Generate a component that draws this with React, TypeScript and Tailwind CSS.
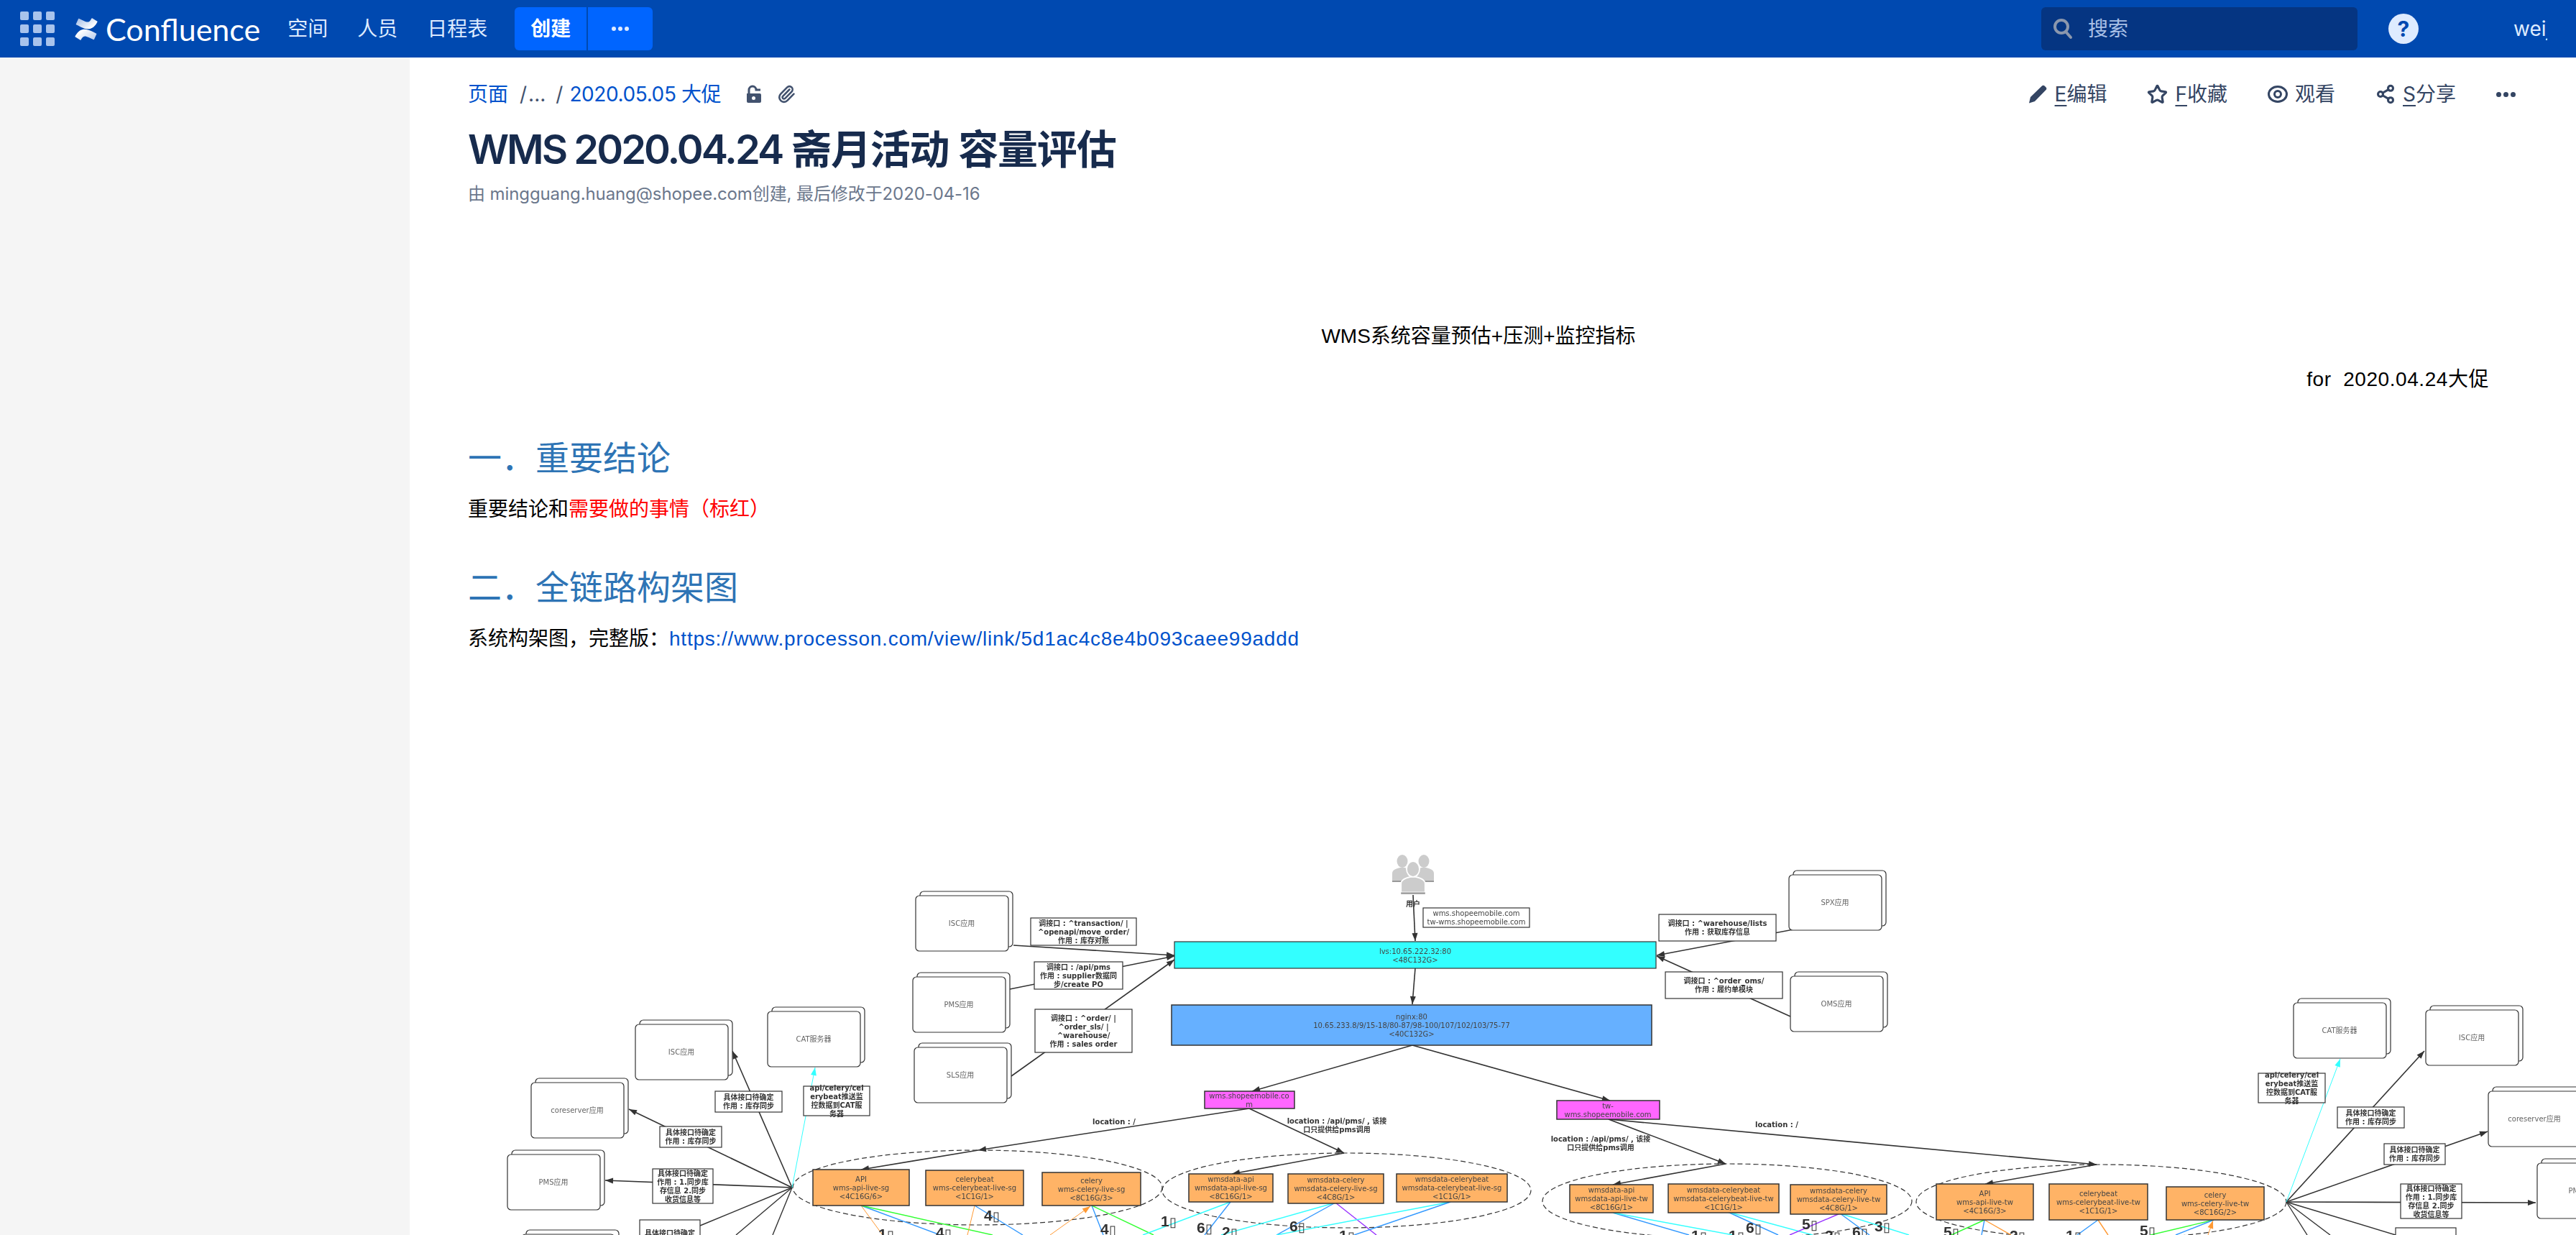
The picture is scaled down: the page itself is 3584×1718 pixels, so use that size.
import React from 'react';
import { Paperclip, Share2, Star } from 'lucide-react';

const BODY = "font-['Inter','Noto_Sans_CJK_SC',sans-serif]";
const DOC = "font-['Liberation_Sans','Noto_Sans_CJK_SC',sans-serif]";
const DIAGRAM_FONT = "'DejaVu Sans','Noto Sans CJK SC',sans-serif";

type Pt = [number, number];

const LINE = '#333333';
const CYAN = '#33ffff';
const BLUE = '#3399ff';
const GREEN = '#33ff33';
const ORANGE = '#ff9933';
const PURPLE = '#9933ff';

// x1, y1, x2, y2 of the two sheets of each app box
const stacks: { x: number; y: number; text: string }[] = [
  { x: 1274, y: 1246, text: 'ISC应用' },
  { x: 1270, y: 1359, text: 'PMS应用' },
  { x: 1272, y: 1457, text: 'SLS应用' },
  { x: 2489, y: 1217, text: 'SPX应用' },
  { x: 2491, y: 1358, text: 'OMS应用' },
  { x: 884, y: 1425, text: 'ISC应用' },
  { x: 1068, y: 1407, text: 'CAT服务器' },
  { x: 739, y: 1506, text: 'coreserver应用' },
  { x: 706, y: 1606, text: 'PMS应用' },
  { x: 726, y: 1717, text: '' },
  { x: 3191, y: 1395, text: 'CAT服务器' },
  { x: 3375, y: 1405, text: 'ISC应用' },
  { x: 3462, y: 1518, text: 'coreserver应用' },
  { x: 3530, y: 1618, text: 'PMS应用' },
];

const orange: { x: number; y: number; x2: number; y2: number; lines: string[] }[] = [
  { x: 1131, y: 1627, x2: 1265, y2: 1677, lines: ['API', 'wms-api-live-sg', '<4C16G/6>'] },
  { x: 1288, y: 1628, x2: 1424, y2: 1677, lines: ['celerybeat', 'wms-celerybeat-live-sg', '<1C1G/1>'] },
  { x: 1450, y: 1631, x2: 1587, y2: 1677, lines: ['celery', 'wms-celery-live-sg', '<8C16G/3>'] },
  { x: 1654, y: 1633, x2: 1771, y2: 1672, lines: ['wmsdata-api', 'wmsdata-api-live-sg', '<8C16G/1>'] },
  { x: 1792, y: 1633, x2: 1925, y2: 1674, lines: ['wmsdata-celery', 'wmsdata-celery-live-sg', '<4C8G/1>'] },
  { x: 1943, y: 1633, x2: 2097, y2: 1672, lines: ['wmsdata-celerybeat', 'wmsdata-celerybeat-live-sg', '<1C1G/1>'] },
  { x: 2184, y: 1648, x2: 2300, y2: 1687, lines: ['wmsdata-api', 'wmsdata-api-live-tw', '<8C16G/1>'] },
  { x: 2321, y: 1647, x2: 2475, y2: 1687, lines: ['wmsdata-celerybeat', 'wmsdata-celerybeat-live-tw', '<1C1G/1>'] },
  { x: 2491, y: 1648, x2: 2625, y2: 1689, lines: ['wmsdata-celery', 'wmsdata-celery-live-tw', '<4C8G/1>'] },
  { x: 2694, y: 1647, x2: 2829, y2: 1697, lines: ['API', 'wms-api-live-tw', '<4C16G/3>'] },
  { x: 2851, y: 1647, x2: 2988, y2: 1697, lines: ['celerybeat', 'wms-celerybeat-live-tw', '<1C1G/1>'] },
  { x: 3014, y: 1651, x2: 3150, y2: 1697, lines: ['celery', 'wms-celery-live-tw', '<8C16G/2>'] },
];

const STOCK = ['具体接口待确定', '作用 : 库存同步'];
const SYNC = ['具体接口待确定', '作用 : 1.同步库', '存信息 2.同步', '收货信息等'];
const CAT = ['api/celery/cel', 'erybeat推送监', '控数据到CAT服', '务器'];

const labels: { x: number; y: number; x2: number; y2: number; lines: string[] }[] = [
  { x: 1434, y: 1277, x2: 1581, y2: 1315, lines: ['调接口 : ^transaction/ |', '^openapi/move_order/', '作用 : 库存对账'] },
  { x: 1439, y: 1338, x2: 1562, y2: 1376, lines: ['调接口 : /api/pms', '作用 : supplier数据同', '步/create PO'] },
  { x: 1440, y: 1404, x2: 1575, y2: 1464, lines: ['调接口 : ^order/ |', '^order_sls/ |', '^warehouse/', '作用 : sales order'] },
  { x: 2308, y: 1272, x2: 2471, y2: 1309, lines: ['调接口 : ^warehouse/lists', '作用 : 获取库存信息'] },
  { x: 2317, y: 1352, x2: 2480, y2: 1389, lines: ['调接口 : ^order_oms/', '作用 : 履约单模块'] },
  { x: 995, y: 1518, x2: 1088, y2: 1547, lines: STOCK },
  { x: 1118, y: 1511, x2: 1210, y2: 1552, lines: CAT },
  { x: 918, y: 1567, x2: 1004, y2: 1596, lines: STOCK },
  { x: 908, y: 1626, x2: 992, y2: 1674, lines: SYNC },
  { x: 890, y: 1697, x2: 974, y2: 1745, lines: ['具体接口待确定', '作用 : 1.推送'] },
  { x: 3142, y: 1493, x2: 3235, y2: 1534, lines: CAT },
  { x: 3252, y: 1540, x2: 3345, y2: 1569, lines: STOCK },
  { x: 3317, y: 1591, x2: 3402, y2: 1620, lines: STOCK },
  { x: 3340, y: 1647, x2: 3425, y2: 1695, lines: SYNC },
  { x: 3333, y: 1708, x2: 3417, y2: 1756, lines: ['具体接口待确定', '作用 : 1.推送'] },
];

const ellipses = [
  { x: 1103, y: 1600, x2: 1617, y2: 1704 },
  { x: 1617, y: 1604, x2: 2130, y2: 1708 },
  { x: 2146, y: 1619, x2: 2660, y2: 1723 },
  { x: 2666, y: 1620, x2: 3181, y2: 1724 },
];

// thick lines that end in an arrow head
const arrows: { a: Pt; b: Pt; color?: string; w?: number }[] = [
  { a: [1966, 1245], b: [1969, 1309] },
  { a: [1969, 1347], b: [1965, 1397] },
  { a: [1965, 1454], b: [1742, 1518] },
  { a: [1965, 1454], b: [2240, 1531] },
  { a: [1738, 1542], b: [1361, 1600] },
  { a: [1361, 1600], b: [1198, 1627] },
  { a: [1738, 1542], b: [1870, 1604] },
  { a: [1870, 1604], b: [1714, 1633] },
  { a: [2238, 1557], b: [2401, 1619] },
  { a: [2401, 1619], b: [2244, 1648] },
  { a: [2238, 1557], b: [2917, 1620] },
  { a: [2917, 1620], b: [2762, 1647] },
  { a: [1410, 1315], b: [1634, 1329] },
  { a: [1405, 1376], b: [1634, 1330] },
  { a: [1407, 1497], b: [1634, 1335] },
  { a: [2617, 1270], b: [2305, 1329] },
  { a: [2491, 1414], b: [2305, 1330] },
  { a: [1102, 1652], b: [1019, 1462] },
  { a: [1102, 1652], b: [875, 1543] },
  { a: [1102, 1652], b: [842, 1642] },
  { a: [3181, 1672], b: [3373, 1462] },
  { a: [3181, 1672], b: [3461, 1574] },
  { a: [3181, 1672], b: [3528, 1673] },
  { a: [1102, 1652], b: [1134, 1485], color: CYAN, w: 1 },
  { a: [3181, 1672], b: [3256, 1473], color: CYAN, w: 1 },
  { a: [1461, 1718], b: [1517, 1678], color: ORANGE, w: 1 },
  { a: [3072, 1718], b: [3079, 1698], color: ORANGE, w: 1 },
];

// plain lines
const lines: { a: Pt; b: Pt; color: string; w?: number }[] = [
  { a: [1102, 1652], b: [974, 1705], color: LINE },
  { a: [1102, 1652], b: [1024, 1718], color: LINE },
  { a: [1102, 1652], b: [1075, 1718], color: LINE },
  { a: [3181, 1672], b: [3333, 1718], color: LINE },
  { a: [3181, 1672], b: [3242, 1718], color: LINE },
  { a: [3181, 1672], b: [3210, 1718], color: LINE },

  { a: [1198, 1677], b: [1228, 1718], color: ORANGE, w: 1 },
  { a: [1198, 1677], b: [1308, 1718], color: BLUE },
  { a: [1198, 1677], b: [1381, 1718], color: GREEN },
  { a: [1356, 1677], b: [1346, 1718], color: ORANGE, w: 1 },
  { a: [1356, 1677], b: [1423, 1718], color: BLUE },
  { a: [1519, 1677], b: [1535, 1718], color: BLUE },
  { a: [1519, 1677], b: [1605, 1718], color: GREEN },
  { a: [1712, 1672], b: [1590, 1718], color: CYAN },
  { a: [1712, 1672], b: [1676, 1718], color: BLUE },
  { a: [1858, 1673], b: [1699, 1718], color: CYAN },
  { a: [1858, 1673], b: [1776, 1718], color: BLUE },
  { a: [1858, 1673], b: [1915, 1718], color: PURPLE },
  { a: [2018, 1672], b: [1776, 1718], color: CYAN },
  { a: [2018, 1672], b: [1884, 1718], color: BLUE },
  { a: [2244, 1687], b: [2350, 1718], color: BLUE },
  { a: [2244, 1687], b: [2411, 1718], color: CYAN },
  { a: [2404, 1686], b: [2474, 1718], color: BLUE },
  { a: [2404, 1686], b: [2522, 1718], color: CYAN },
  { a: [2560, 1688], b: [2490, 1718], color: PURPLE },
  { a: [2560, 1688], b: [2601, 1718], color: BLUE },
  { a: [2560, 1688], b: [2656, 1718], color: CYAN },
  { a: [2761, 1697], b: [2715, 1718], color: GREEN },
  { a: [2761, 1697], b: [2757, 1718], color: BLUE },
  { a: [2761, 1697], b: [2798, 1718], color: ORANGE },
  { a: [2919, 1697], b: [2890, 1718], color: BLUE },
  { a: [2919, 1697], b: [2933, 1718], color: ORANGE },
  { a: [3080, 1697], b: [2992, 1718], color: GREEN },
  { a: [3080, 1697], b: [3027, 1718], color: BLUE },
];

// instance counts on the links, the CJK glyph is missing in the source so it draws as a box
const counts: { x: number; y: number; t: string }[] = [
  { x: 1222, y: 1724, t: '1' },
  { x: 1302, y: 1722, t: '4' },
  { x: 1369, y: 1698, t: '4' },
  { x: 1531, y: 1717, t: '4' },
  { x: 1615, y: 1706, t: '1' },
  { x: 1665, y: 1715, t: '6' },
  { x: 1700, y: 1721, t: '2' },
  { x: 1794, y: 1713, t: '6' },
  { x: 1863, y: 1726, t: '1' },
  { x: 2353, y: 1726, t: '1' },
  { x: 2405, y: 1726, t: '1' },
  { x: 2429, y: 1715, t: '6' },
  { x: 2507, y: 1710, t: '5' },
  { x: 2539, y: 1726, t: '2' },
  { x: 2577, y: 1721, t: '6' },
  { x: 2608, y: 1713, t: '3' },
  { x: 2704, y: 1721, t: '5' },
  { x: 2796, y: 1726, t: '2' },
  { x: 2874, y: 1726, t: '1' },
  { x: 2977, y: 1719, t: '5' },
];

const MultiLine = ({ cx, cy, rows, size, color, weight }: { cx: number; cy: number; rows: string[]; size: number; color: string; weight?: number }) => {
  const lh = 12;
  const top = cy - ((rows.length - 1) * lh) / 2;
  return (
    <text textAnchor="middle" fontSize={size} fill={color} fontWeight={weight} fontFamily={DIAGRAM_FONT}>
      {rows.map((r, i) => (
        <tspan key={i} x={cx} y={top + i * lh + size * 0.36}>
          {r}
        </tspan>
      ))}
    </text>
  );
};

const ArrowHead = ({ a, b, color }: { a: Pt; b: Pt; color: string }) => {
  const dx = b[0] - a[0];
  const dy = b[1] - a[1];
  const len = Math.hypot(dx, dy) || 1;
  const ux = dx / len;
  const uy = dy / len;
  const size = 11;
  const half = 4;
  const bx = b[0] - ux * size;
  const by = b[1] - uy * size;
  const pts = `${b[0]},${b[1]} ${bx - uy * half},${by + ux * half} ${bx + uy * half},${by - ux * half}`;
  return <polygon points={pts} fill={color} />;
};

const Person = ({ x, y, scale = 1, front }: { x: number; y: number; scale?: number; front?: boolean }) => (
  <g transform={`translate(${x} ${y}) scale(${scale})`} stroke={front ? '#ffffff' : 'none'} strokeWidth={front ? 1.5 : 0} fill="#cccccc">
    <ellipse cx="0" cy="0" rx="7.5" ry="9" />
    <path d="M-14 27 V17 C-14 12 -8 10 -3 9 H3 C8 10 14 12 14 17 V27 Z" />
    <rect x="-14" y="27" width="28" height="2" fill="#999999" stroke="none" />
  </g>
);

const Diagram = () => (
  <svg viewBox="570 1160 3014 558" className="block w-[3014px] h-[558px] blur-[0.4px]">
    {ellipses.map((e, i) => (
      <ellipse
        key={i}
        cx={(e.x + e.x2) / 2}
        cy={(e.y + e.y2) / 2}
        rx={(e.x2 - e.x) / 2}
        ry={(e.y2 - e.y) / 2}
        fill="none"
        stroke={LINE}
        strokeWidth={1.2}
        strokeDasharray="7 4"
      />
    ))}

    {lines.map((l, i) => (
      <line key={i} x1={l.a[0]} y1={l.a[1]} x2={l.b[0]} y2={l.b[1]} stroke={l.color} strokeWidth={l.w ?? 1.4} />
    ))}
    {arrows.map((l, i) => (
      <g key={i}>
        <line x1={l.a[0]} y1={l.a[1]} x2={l.b[0]} y2={l.b[1]} stroke={l.color ?? LINE} strokeWidth={l.w ?? 1.6} />
        <ArrowHead a={l.a} b={l.b} color={l.color ?? LINE} />
      </g>
    ))}

    {stacks.map((s, i) => (
      <g key={i} stroke={LINE} strokeWidth={1.2}>
        <rect x={s.x + 6} y={s.y - 6} width={129} height={77} rx={5} fill="#ffffff" />
        <rect x={s.x} y={s.y} width={129} height={77} rx={5} fill="#ffffff" />
        <text x={s.x + 64} y={s.y + 42} textAnchor="middle" fontSize={10} fill="#666666" stroke="none" fontFamily={DIAGRAM_FONT}>
          {s.text}
        </text>
      </g>
    ))}

    <rect x={1634} y={1310} width={670} height={37} fill="#33ffff" stroke={LINE} strokeWidth={1.2} />
    <MultiLine cx={1969} cy={1329} rows={['lvs:10.65.222.32:80', '<48C132G>']} size={10} color="#444444" />
    <rect x={1630} y={1398} width={668} height={56} fill="#66b0ff" stroke={LINE} strokeWidth={1.5} />
    <MultiLine cx={1964} cy={1426} rows={['nginx:80', '10.65.233.8/9/15-18/80-87/98-100/107/102/103/75-77', '<40C132G>']} size={10} color="#444444" />

    <rect x={1676} y={1518} width={125} height={24} fill="#ff66ff" stroke={LINE} strokeWidth={1.5} />
    <MultiLine cx={1738} cy={1530} rows={['wms.shopeemobile.co', 'm']} size={10} color="#444444" />
    <rect x={2166} y={1531} width={143} height={26} fill="#ff66ff" stroke={LINE} strokeWidth={1.5} />
    <MultiLine cx={2237} cy={1544} rows={['tw-', 'wms.shopeemobile.com']} size={10} color="#444444" />

    {orange.map((o, i) => (
      <g key={i}>
        <rect x={o.x} y={o.y} width={o.x2 - o.x} height={o.y2 - o.y} fill="#ffb366" stroke={LINE} strokeWidth={1.5} />
        <MultiLine cx={(o.x + o.x2) / 2} cy={(o.y + o.y2) / 2} rows={o.lines} size={10} color="#444444" />
      </g>
    ))}

    {labels.map((l, i) => (
      <g key={i}>
        <rect x={l.x} y={l.y} width={l.x2 - l.x} height={l.y2 - l.y} fill="#ffffff" stroke={LINE} strokeWidth={1.2} />
        <MultiLine cx={(l.x + l.x2) / 2} cy={(l.y + l.y2) / 2} rows={l.lines} size={10} color="#333333" weight={700} />
      </g>
    ))}

    <rect x={1980} y={1263} width={148} height={27} fill="#ffffff" stroke={LINE} strokeWidth={1.2} />
    <MultiLine cx={2054} cy={1276} rows={['wms.shopeemobile.com', 'tw-wms.shopeemobile.com']} size={10} color="#444444" />

    <Person x={1951} y={1198} />
    <Person x={1981} y={1198} />
    <Person x={1966} y={1209} scale={1.2} front />
    <MultiLine cx={1966} cy={1257} rows={['用户']} size={10} color="#333333" weight={700} />

    <MultiLine cx={1550} cy={1560} rows={['location : /']} size={10} color="#333333" weight={700} />
    <MultiLine cx={1860} cy={1565} rows={['location : /api/pms/ , 该接', '口只提供给pms调用']} size={10} color="#333333" weight={700} />
    <MultiLine cx={2227} cy={1590} rows={['location : /api/pms/ , 该接', '口只提供给pms调用']} size={10} color="#333333" weight={700} />
    <MultiLine cx={2472} cy={1564} rows={['location : /']} size={10} color="#333333" weight={700} />

    {counts.map((c, i) => (
      <text key={i} x={c.x} y={c.y} fontSize={21} fontWeight={700} fill="#333333" fontFamily="'Liberation Sans',sans-serif">
        {c.t}
        <tspan fontSize={18} fontWeight={400}>▯</tspan>
      </text>
    ))}
  </svg>
);

const ConfluenceMark = () => (
  <svg viewBox="0 0 24 24" className="w-[32px] h-[31px]">
    <defs>
      <linearGradient id="cfA" x1="1" y1="1" x2="0.1" y2="0.4">
        <stop offset="0" stopColor="#b3c9ec" />
        <stop offset="1" stopColor="#ffffff" />
      </linearGradient>
      <linearGradient id="cfB" x1="0" y1="0" x2="0.9" y2="0.6">
        <stop offset="0" stopColor="#9fbbe6" />
        <stop offset="1" stopColor="#ffffff" />
      </linearGradient>
    </defs>
    <path
      fill="url(#cfA)"
      d="M.87 18.257c-.248.382-.53.875-.763 1.245a.764.764 0 0 0 .255 1.04l4.965 3.054a.764.764 0 0 0 1.058-.26c.199-.332.454-.763.733-1.221 1.967-3.247 3.945-2.853 7.508-1.146l4.957 2.337a.764.764 0 0 0 1.028-.382l2.364-5.346a.764.764 0 0 0-.382-1 599.851 599.851 0 0 1-4.965-2.361C10.911 10.97 5.224 11.185.87 18.257z"
    />
    <path
      fill="url(#cfB)"
      d="M23.131 5.743c.248-.382.53-.875.763-1.245a.764.764 0 0 0-.255-1.04L18.674.404a.764.764 0 0 0-1.058.26c-.199.332-.454.763-.733 1.221-1.967 3.247-3.945 2.853-7.508 1.146L4.418.694a.764.764 0 0 0-1.028.382L1.026 6.422a.764.764 0 0 0 .382 1c1.04.49 3.113 1.472 4.965 2.361 6.716 3.247 12.403 3.032 16.758-4.04z"
    />
  </svg>
);

const AppSwitcher = () => (
  <div className="grid grid-cols-3 gap-[6px] w-[48px]">
    {Array.from({ length: 9 }).map((_, i) => (
      <div key={i} className="w-[12px] h-[12px] rounded-[2px] bg-[#a8c3ec]" />
    ))}
  </div>
);

const TopBar = () => (
  <header className={`${BODY} h-[80px] shrink-0 bg-[#0049b0] flex items-center text-[28px] text-[#deebff]`}>
    <div className="ml-[28px]">
      <AppSwitcher />
    </div>
    <div className="ml-[28px]">
      <ConfluenceMark />
    </div>
    <span className="ml-[11px] text-[43px] leading-none font-normal text-white font-['Lato',sans-serif]">Confluence</span>
    <nav className="ml-[38px] flex items-center gap-[41px]">
      <span>空间</span>
      <span>人员</span>
      <span>日程表</span>
    </nav>
    <div className="ml-[38px] flex h-[60px] gap-[2px]">
      <div className="w-[100px] rounded-l-[6px] bg-[#0065ff] flex items-center justify-center font-bold text-white">创建</div>
      <div className="w-[90px] rounded-r-[6px] bg-[#0065ff] flex items-center justify-center gap-[3px]">
        <i className="w-[6px] h-[6px] rounded-full bg-[#deebff]" />
        <i className="w-[6px] h-[6px] rounded-full bg-[#deebff]" />
        <i className="w-[6px] h-[6px] rounded-full bg-[#deebff]" />
      </div>
    </div>
    <div className="ml-auto w-[440px] h-[60px] rounded-[6px] bg-[#053582] flex items-center pl-[16px]">
      <svg viewBox="0 0 28 32" className="w-[28px] h-[32px]" fill="none" stroke="#8b97ad" strokeWidth="4">
        <circle cx="12" cy="13" r="9" />
        <path d="M18 20l7 8" strokeLinecap="round" />
      </svg>
      <span className="ml-[21px] text-[#a9c0e6]">搜索</span>
    </div>
    <div className="ml-[43px] w-[42px] h-[42px] rounded-full bg-[#deebff] flex items-center justify-center text-[#0049b0] font-bold text-[30px] leading-none">?</div>
    <div className="ml-[132px] w-[47px] mr-[40px] overflow-hidden whitespace-nowrap text-[#deebff]">weijian</div>
  </header>
);

const Action = ({ icon, hot, label }: { icon: React.ReactNode; hot?: string; label: string }) => (
  <div className="flex items-center">
    {icon}
    <span className="ml-[10px]">
      {hot && <span className="underline underline-offset-[5px]">{hot}</span>}
      {label}
    </span>
  </div>
);

const PageBar = () => (
  <div className={`${BODY} flex items-center justify-between h-[40px] mt-[31px] pr-[84px] text-[28px]`}>
    <div className="flex items-center whitespace-nowrap">
      <span className="text-[#0052cc]">页面</span>
      <span className="ml-[16px] text-[#42526e]">/</span>
      <span className="ml-[2px] text-[#42526e]">...</span>
      <span className="ml-[14px] text-[#42526e]">/</span>
      <span className="ml-[9px] tracking-[-0.4px] text-[#0052cc]">2020.05.05 大促</span>
      <svg viewBox="0 0 28 28" className="ml-[33px] w-[28px] h-[28px]" fill="#42526e">
        <path d="M3 13h18a2 2 0 0 1 2 2v9a2 2 0 0 1-2 2H5a2 2 0 0 1-2-2z" />
        <path d="M7 13V8a5 5 0 0 1 10 0h6" fill="none" stroke="#42526e" strokeWidth="3" transform="translate(-1 0)" />
        <circle cx="12.5" cy="19.5" r="2.5" fill="#ffffff" />
      </svg>
      <Paperclip className="ml-[17px] w-[26px] h-[26px] text-[#42526e]" strokeWidth={2.4} />
    </div>
    <div className="flex items-center gap-[56px] text-[#344563]">
      <Action
        hot="E"
        label="编辑"
        icon={
          <svg viewBox="0 0 28 28" className="w-[28px] h-[28px]" fill="#344563">
            <path d="M20 2.5c1-1 2.600-1 3.600 0l2 2c1 1 1 2.600 0 3.600L10 24l-8 2.500L4 18z" />
          </svg>
        }
      />
      <Action hot="F" label="收藏" icon={<Star className="w-[29px] h-[29px]" strokeWidth={2.6} />} />
      <Action
        label="观看"
        icon={
          <svg viewBox="0 0 28 28" className="w-[28px] h-[28px]" fill="none" stroke="#344563" strokeWidth="3">
            <ellipse cx="14" cy="14" rx="12.500" ry="10.500" />
            <circle cx="14" cy="14" r="4.500" />
          </svg>
        }
      />
      <Action hot="S" label="分享" icon={<Share2 className="w-[28px] h-[28px]" strokeWidth={2.6} />} />
      <div className="flex gap-[3px]">
        <i className="w-[7px] h-[7px] rounded-full bg-[#344563]" />
        <i className="w-[7px] h-[7px] rounded-full bg-[#344563]" />
        <i className="w-[7px] h-[7px] rounded-full bg-[#344563]" />
      </div>
    </div>
  </div>
);

const Article = () => (
  <div className={`${DOC} pr-[121px] text-[28px] leading-[40px] text-black`}>
    <p className="mt-[160px] text-center">WMS系统容量预估+压测+监控指标</p>
    <p className="mt-[20px] text-right tracking-[0.55px]">for&nbsp; 2020.04.24大促</p>
    <h2 className="mt-[58px] text-[47px] leading-[64px] text-[#2e74b5]">一．重要结论</h2>
    <p className="mt-[19px]">
      重要结论和<span className="text-[#ff0000]">需要做的事情（标红）</span>
    </p>
    <h2 className="mt-[57px] text-[47px] leading-[64px] text-[#2e74b5]">二．全链路构架图</h2>
    <p className="mt-[19px]">
      系统构架图，完整版：<a className="tracking-[0.76px] text-[#0052cc]" href="#processon">https://www.processon.com/view/link/5d1ac4c8e4b093caee99addd</a>
    </p>
  </div>
);

export default function App() {
  return (
    <div className="h-screen overflow-hidden flex flex-col bg-white">
      <TopBar />
      <div className="flex flex-1 min-h-0">
        <aside className="w-[570px] shrink-0 bg-[#f5f5f5]" />
        <main className="flex-1 min-w-0 overflow-hidden">
          <div className="pl-[81px]">
            <PageBar />
            <h1 className={`${BODY} mt-[21px] text-[56px] leading-[72px] font-semibold tracking-[-1.2px] text-[#172b4d] whitespace-nowrap`}>
              <span className="tracking-[-3px]">WMS 2020.04.24</span> 斋月活动 容量评估
            </h1>
            <p className={`${BODY} mt-[8px] text-[24px] leading-[36px] tracking-[-0.1px] text-[#6b778c]`}>
              由 mingguang.huang@shopee.com创建, 最后修改于2020-04-16
            </p>
            <Article />
          </div>
          <div className="mt-[251px]">
            <Diagram />
          </div>
        </main>
      </div>
    </div>
  );
}
